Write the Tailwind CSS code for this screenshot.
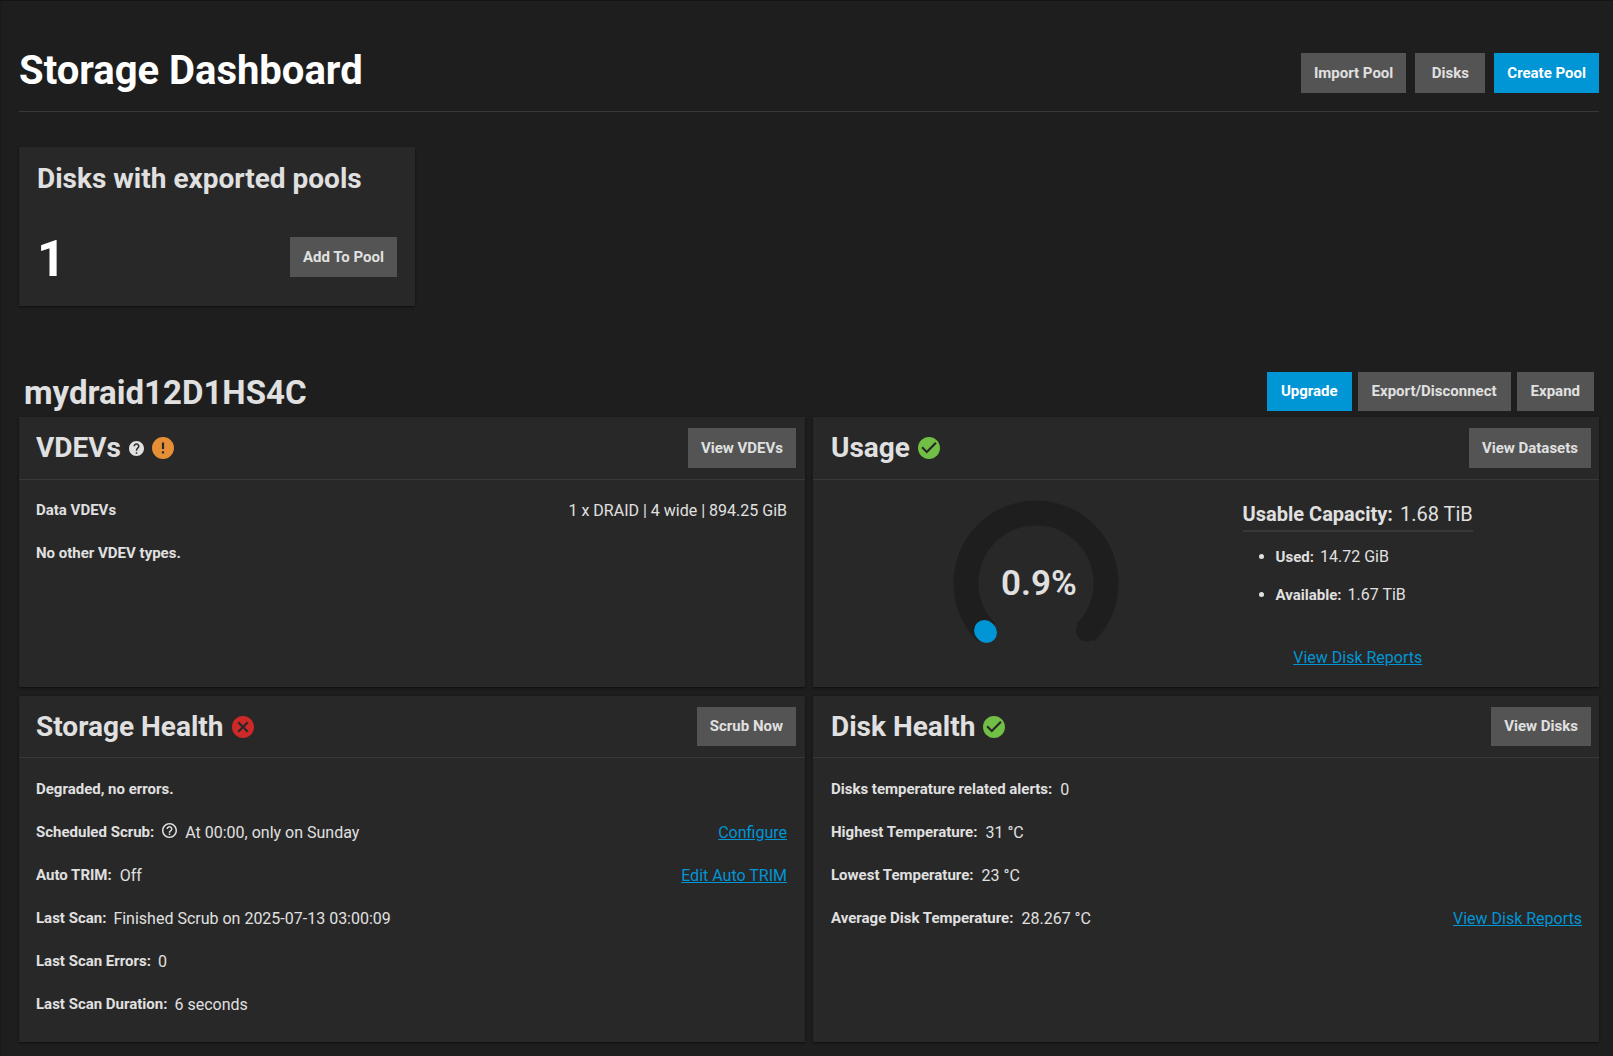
<!DOCTYPE html>
<html lang="en">
<head>
<meta charset="utf-8">
<meta name="viewport" content="width=device-width, initial-scale=1">
<title>Storage Dashboard</title>
<script src="https://cdn.jsdelivr.net/npm/@tailwindcss/browser@4"></script>
</head>
<body class="min-h-screen border-t border-l border-t-[#151515] border-l-[#1a1a1a] bg-[#1e1e1e] pb-3.5 pl-[18px] pr-3.5 font-[Roboto,sans-serif] text-base text-[#e0e0e0]">

<!-- Shared icon shapes -->
<svg class="hidden" aria-hidden="true">
  <symbol id="ok" viewBox="2 2 20 20"><path d="M12 2C6.48 2 2 6.48 2 12s4.48 10 10 10 10-4.48 10-10S17.52 2 12 2zm-2 15l-5-5 1.41-1.41L10 14.17l7.59-7.59L19 8l-9 9z"/></symbol>
  <symbol id="warn" viewBox="2 2 20 20"><path d="M13 13h-2V7h2m0 10h-2v-2h2M12 2A10 10 0 0 0 2 12a10 10 0 0 0 10 10 10 10 0 0 0 10-10A10 10 0 0 0 12 2z"/></symbol>
  <symbol id="fail" viewBox="2 2 20 20"><path d="M12 2C6.47 2 2 6.47 2 12s4.47 10 10 10 10-4.47 10-10S17.53 2 12 2zm5 13.59L15.59 17 12 13.41 8.41 17 7 15.59 10.59 12 7 8.41 8.41 7 12 10.59 15.59 7 17 8.41 13.41 12 17 15.59z"/></symbol>
  <symbol id="help" viewBox="2 2 20 20"><path d="M12 2C6.48 2 2 6.48 2 12s4.48 10 10 10 10-4.48 10-10S17.52 2 12 2zm1 17h-2v-2h2v2zm2.07-7.75l-.9.92C13.45 12.9 13 13.5 13 15h-2v-.5c0-1.1.45-2.1 1.17-2.83l1.24-1.26c.37-.36.59-.86.59-1.41 0-1.1-.9-2-2-2s-2 .9-2 2H8c0-2.21 1.79-4 4-4s4 1.79 4 4c0 .88-.36 1.68-.93 2.25z"/></symbol>
  <symbol id="help-outline" viewBox="2 2 20 20"><path d="M11 18h2v-2h-2v2zm1-16C6.48 2 2 6.48 2 12s4.48 10 10 10 10-4.48 10-10S17.52 2 12 2zm0 18c-4.41 0-8-3.59-8-8s3.59-8 8-8 8 3.59 8 8-3.59 8-8 8zm0-14c-2.21 0-4 1.79-4 4h2c0-1.1.9-2 2-2s2 .9 2 2c0 2-3 1.75-3 5h2c0-2.25 3-2.5 3-5 0-2.21-1.79-4-4-4z"/></symbol>
</svg>

<header class="flex items-center justify-between border-b border-[#383838] pt-[52px] pb-[18px]">
  <h1 class="pb-1 text-[40px] leading-9 font-bold text-white">Storage Dashboard</h1>
  <div class="flex gap-[9px]">
    <button class="h-10 bg-[#545454] px-[13px] text-[15px] font-bold">Import Pool</button>
    <button class="h-10 min-w-[70px] bg-[#545454] px-[13px] text-[15px] font-bold">Disks</button>
    <button class="h-10 bg-[#0095d5] px-[13px] text-[15px] font-bold text-white">Create Pool</button>
  </div>
</header>

<main>
  <section class="mt-[35px] w-[396px] bg-[#282828] px-[18px] pt-4 pb-[29px] shadow-[0_1px_2px_rgba(0,0,0,0.6)]">
    <h2 class="text-[28px] leading-8 font-bold">Disks with exported pools</h2>
    <div class="mt-[42px] flex items-center justify-between">
      <span class="pt-1 text-[50px] leading-9 font-bold text-white">1</span>
      <button class="h-10 bg-[#545454] px-[13px] text-[15px] font-bold">Add To Pool</button>
    </div>
  </section>

  <div class="mt-[65px] flex items-center justify-between pr-[5px] pl-[5px]">
    <h2 class="pt-1 text-[33px] leading-9 font-bold">mydraid12D1HS4C</h2>
    <div class="flex gap-1.5">
      <button class="h-[39px] bg-[#0095d5] px-3.5 text-[15px] font-bold text-white">Upgrade</button>
      <button class="h-[39px] bg-[#545454] px-3.5 text-[15px] font-bold">Export/Disconnect</button>
      <button class="h-[39px] bg-[#545454] px-3.5 text-[15px] font-bold">Expand</button>
    </div>
  </div>

  <div class="mt-1.5 grid grid-cols-2 gap-x-2 gap-y-[9px]">

    <section class="min-h-[270px] bg-[#282828] shadow-[0_1px_2px_rgba(0,0,0,0.6)]">
      <div class="flex h-[63px] items-center justify-between border-b border-[#383838] pr-[9px] pl-[17px]">
        <div class="flex items-center gap-2">
          <h3 class="text-[28px] leading-8 font-bold">VDEVs</h3>
          <svg class="size-[15px] fill-[#e0e0e0]" role="img" aria-label="Help"><use href="#help"/></svg>
          <svg class="size-[22px] fill-[#e68f36]" role="img" aria-label="Warning"><use href="#warn"/></svg>
        </div>
        <button class="h-10 bg-[#545454] px-[13px] text-[15px] font-bold">View VDEVs</button>
      </div>
      <div class="pt-[9px] pr-[18px] pl-[17px]">
        <div class="flex h-[43px] items-center justify-between"><b class="text-[15px]">Data VDEVs</b><span>1 x DRAID | 4 wide | 894.25 GiB</span></div>
        <div class="flex h-[43px] items-center"><b class="text-[15px]">No other VDEV types.</b></div>
      </div>
    </section>

    <section class="min-h-[270px] bg-[#282828] shadow-[0_1px_2px_rgba(0,0,0,0.6)]">
      <div class="flex h-[63px] items-center justify-between border-b border-[#383838] pr-2 pl-[18px]">
        <div class="flex items-center gap-2">
          <h3 class="text-[28px] leading-8 font-bold">Usage</h3>
          <svg class="size-[22px] fill-[#71bf44]" role="img" aria-label="OK"><use href="#ok"/></svg>
        </div>
        <button class="h-10 bg-[#545454] px-[13px] text-[15px] font-bold">View Datasets</button>
      </div>
      <div class="grid grid-cols-[11fr_9fr] pt-5 pr-[18px] pl-4">
        <div class="flex justify-center">
          <svg class="h-[150px] w-[166px]" viewBox="0 0 166 150" role="img" aria-label="0.9% used">
            <path d="M33.5 132.5A70 70 0 1 1 132.5 132.5" fill="none" stroke="#1e1e1e" stroke-width="25"/>
            <circle cx="133.5" cy="131" r="10.5" fill="#1e1e1e"/>
            <path d="M31.5 130.5L33.5 132.5" stroke="#0095d5" stroke-width="21" stroke-linecap="round"/>
            <text x="86" y="95" text-anchor="middle" class="fill-[#e0e0e0] text-[35px] font-semibold">0.9%</text>
          </svg>
        </div>
        <div class="flex w-fit flex-col">
          <p class="border-b-2 border-[#383838] pb-0.5 text-xl leading-7"><b class="mr-[7px]">Usable Capacity:</b>1.68 TiB</p>
          <ul class="mt-1.5 list-disc pl-[33px] leading-[37px]">
            <li><b class="mr-1.5 text-[15px]">Used:</b>14.72 GiB</li>
            <li><b class="mr-1.5 text-[15px]">Available:</b>1.67 TiB</li>
          </ul>
          <a href="#" class="mt-8 self-center text-[#0095d5] underline">View Disk Reports</a>
        </div>
      </div>
    </section>

    <section class="bg-[#282828] shadow-[0_1px_2px_rgba(0,0,0,0.6)]">
      <div class="flex h-[62px] items-center justify-between border-b border-[#383838] pr-[9px] pl-[17px]">
        <div class="flex items-center gap-[9px]">
          <h3 class="text-[28px] leading-8 font-bold">Storage Health</h3>
          <svg class="size-[22px] fill-[#ce2929]" role="img" aria-label="Error"><use href="#fail"/></svg>
        </div>
        <button class="h-[39px] bg-[#545454] px-[13px] text-[15px] font-bold">Scrub Now</button>
      </div>
      <div class="pt-[10px] pr-[18px] pb-4 pl-[17px]">
        <div class="flex h-[43px] items-center"><b class="text-[15px]">Degraded, no errors.</b></div>
        <div class="flex h-[43px] items-center gap-2"><b class="text-[15px]">Scheduled Scrub:</b><svg class="mb-1 size-[15px] fill-[#e0e0e0]" role="img" aria-label="Help"><use href="#help-outline"/></svg><span>At 00:00, only on Sunday</span><a href="#" class="ml-auto text-[#0095d5] underline">Configure</a></div>
        <div class="flex h-[43px] items-center gap-2"><b class="text-[15px]">Auto TRIM:</b><span>Off</span><a href="#" class="ml-auto text-[#0095d5] underline">Edit Auto TRIM</a></div>
        <div class="flex h-[43px] items-center gap-[7px]"><b class="text-[15px]">Last Scan:</b><span>Finished Scrub on 2025-07-13 03:00:09</span></div>
        <div class="flex h-[43px] items-center gap-[7px]"><b class="text-[15px]">Last Scan Errors:</b><span>0</span></div>
        <div class="flex h-[43px] items-center gap-[7px]"><b class="text-[15px]">Last Scan Duration:</b><span>6 seconds</span></div>
      </div>
    </section>

    <section class="bg-[#282828] shadow-[0_1px_2px_rgba(0,0,0,0.6)]">
      <div class="flex h-[62px] items-center justify-between border-b border-[#383838] pr-2 pl-[18px]">
        <div class="flex items-center gap-2">
          <h3 class="text-[28px] leading-8 font-bold">Disk Health</h3>
          <svg class="size-[22px] fill-[#71bf44]" role="img" aria-label="OK"><use href="#ok"/></svg>
        </div>
        <button class="h-[39px] bg-[#545454] px-[13px] text-[15px] font-bold">View Disks</button>
      </div>
      <div class="pt-[10px] pr-[17px] pb-4 pl-[18px]">
        <div class="flex h-[43px] items-center gap-2"><b class="text-[15px]">Disks temperature related alerts:</b><span>0</span></div>
        <div class="flex h-[43px] items-center gap-2"><b class="text-[15px]">Highest Temperature:</b><span>31 °C</span></div>
        <div class="flex h-[43px] items-center gap-2"><b class="text-[15px]">Lowest Temperature:</b><span>23 °C</span></div>
        <div class="flex h-[43px] items-center gap-2"><b class="text-[15px]">Average Disk Temperature:</b><span>28.267 °C</span><a href="#" class="ml-auto text-[#0095d5] underline">View Disk Reports</a></div>
      </div>
    </section>
  </div>
</main>
</body>
</html>
